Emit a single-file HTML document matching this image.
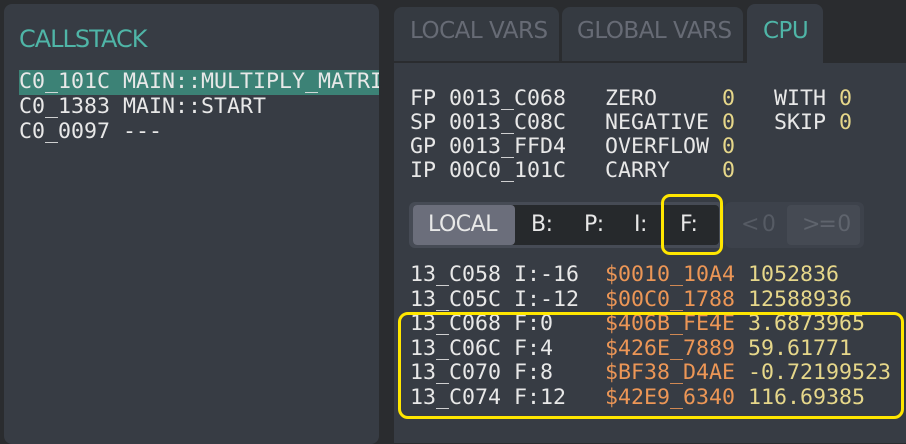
<!DOCTYPE html>
<html><head><style>
body{margin:0;width:906px;height:432px;background:#2a2c2f;position:relative;overflow:hidden;font-family:"DejaVu Sans Mono","Liberation Mono",monospace;color:#e8e8e8}
.a{position:absolute}
.m{font-size:21.6px;line-height:24px;white-space:pre}
.s{font-family:"DejaVu Sans","Liberation Sans",sans-serif;letter-spacing:-0.5px}
.y{color:#e6d78a}.o{color:#ec9656}
</style></head><body>
<div class="a" style="left:4px;top:4px;width:375px;height:440px;background:#373c44;border-radius:8px;overflow:hidden">
 <div class="a s" style="left:15px;top:21px;font-size:24px;color:#4fb5a7;letter-spacing:-1px">CALLSTACK</div>
 <div class="a" style="left:15px;top:66px;width:400px;height:25px;background:#3c8276"></div>
 <div class="a m" style="left:15px;top:65px;line-height:25px">C0_101C MAIN::MULTIPLY_MATRIX
C0_1383 MAIN::START
C0_0097 ---</div>
</div>
<div class="a" style="left:394px;top:7px;width:165px;height:54px;background:#353a41;border-radius:8px 8px 0 0"></div>
<div class="a s" style="left:410px;top:18px;font-size:23px;color:#676b75">LOCAL VARS</div>
<div class="a" style="left:562px;top:7px;width:181px;height:54px;background:#353a41;border-radius:8px 8px 0 0"></div>
<div class="a s" style="left:577px;top:18px;font-size:23px;color:#676b75">GLOBAL VARS</div>
<div class="a" style="left:747px;top:4px;width:76px;height:62px;background:#373c44;border-radius:8px 8px 0 0"></div>
<div class="a s" style="left:763px;top:18px;font-size:23px;color:#4fb5a7">CPU</div>
<div class="a" style="left:394px;top:63px;width:520px;height:380px;background:#373c44"></div>
<div class="a m" style="left:410px;top:87px">FP 0013_C068   ZERO     <span class="y">0</span>   WITH <span class="y">0</span>
SP 0013_C08C   NEGATIVE <span class="y">0</span>   SKIP <span class="y">0</span>
GP 0013_FFD4   OVERFLOW <span class="y">0</span>
IP 00C0_101C   CARRY    <span class="y">0</span></div>
<div class="a" style="left:409px;top:202px;width:315px;height:46px;background:#464b55;border-radius:6px"></div>
<div class="a" style="left:413px;top:205px;width:306px;height:40px;background:#26292c;border-radius:4px"></div>
<div class="a" style="left:413px;top:205px;width:102px;height:40px;background:#6b6e7b;border-radius:4px"></div>
<div class="a s" style="left:428px;top:212px;font-size:22px">LOCAL</div>
<div class="a s" style="left:531px;top:212px;font-size:22px">B:</div>
<div class="a s" style="left:584px;top:212px;font-size:22px">P:</div>
<div class="a s" style="left:634px;top:212px;font-size:22px">I:</div>
<div class="a s" style="left:680px;top:212px;font-size:22px">F:</div>
<div class="a" style="left:661px;top:194px;width:56px;height:55px;border:3px solid #ffe600;border-radius:9px"></div>
<div class="a" style="left:725px;top:202px;width:139px;height:46px;background:#3d424b;border-radius:6px"></div>
<div class="a" style="left:787px;top:205px;width:73px;height:40px;background:#454a53;border-radius:4px"></div>
<div class="a s" style="left:741px;top:212px;font-size:22px;color:#565b64;letter-spacing:-1px">&lt;&#8201;0</div>
<div class="a s" style="left:802px;top:212px;font-size:22px;color:#5f646d;letter-spacing:-2px">&gt;=&#8201;0</div>
<div class="a m" style="left:410px;top:263px;line-height:24.5px">13_C058 I:-16  <span class="o">$0010_10A4</span> <span class="y">1052836</span>
13_C05C I:-12  <span class="o">$00C0_1788</span> <span class="y">12588936</span>
13_C068 F:0    <span class="o">$406B_FE4E</span> <span class="y">3.6873965</span>
13_C06C F:4    <span class="o">$426E_7889</span> <span class="y">59.61771</span>
13_C070 F:8    <span class="o">$BF38_D4AE</span> <span class="y">-0.72199523</span>
13_C074 F:12   <span class="o">$42E9_6340</span> <span class="y">116.69385</span></div>
<div class="a" style="left:398px;top:312px;width:500px;height:101px;border:3px solid #ffe600;border-radius:10px"></div>
</body></html>
